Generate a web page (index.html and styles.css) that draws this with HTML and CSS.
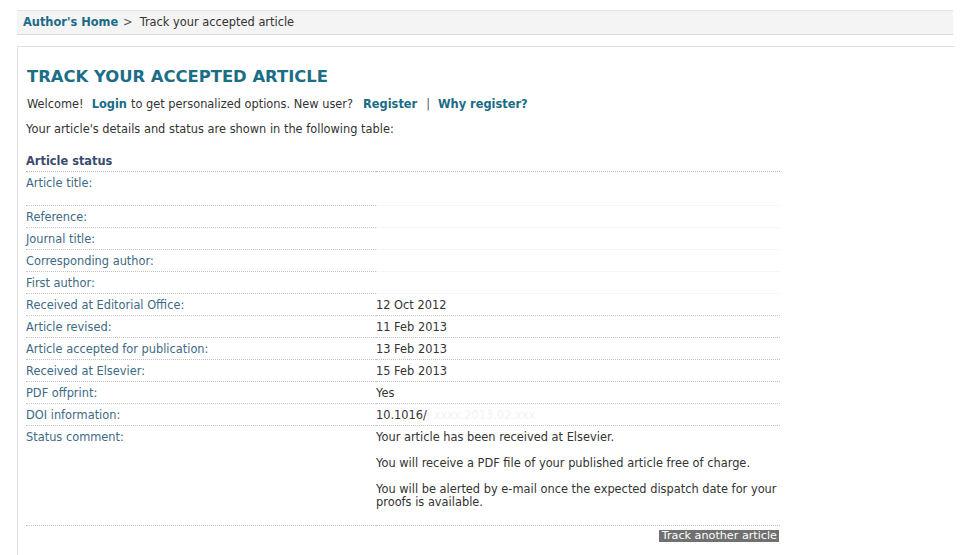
FILE: index.html
```html
<!DOCTYPE html>
<html>
<head>
<meta charset="utf-8">
<title>Track your accepted article</title>
<link rel="stylesheet" href="styles.css">
</head>
<body>
<div class="breadcrumb"><a class="crumb-link" href="#">Author's Home</a><span class="sep">&gt;</span>Track your accepted article</div>
<div class="panel">
  <h1 class="title">TRACK YOUR ACCEPTED ARTICLE</h1>
  <p class="welcome">Welcome!<a class="link" href="#">Login</a>to get personalized options. New user?<a class="link reg" href="#">Register</a><span class="bar">|</span><a class="link why" href="#">Why register?</a></p>
  <p class="intro">Your article's details and status are shown in the following table:</p>
  <table class="status">
    <tr><th colspan="2" class="head">Article status</th></tr>
    <tr class="tall faint"><td class="label">Article title:</td><td class="value"></td></tr>
    <tr class="faint"><td class="label">Reference:</td><td class="value"></td></tr>
    <tr class="faint"><td class="label">Journal title:</td><td class="value"></td></tr>
    <tr class="faint"><td class="label">Corresponding author:</td><td class="value"></td></tr>
    <tr class="faint"><td class="label">First author:</td><td class="value"></td></tr>
    <tr><td class="label">Received at Editorial Office:</td><td class="value">12 Oct 2012</td></tr>
    <tr><td class="label">Article revised:</td><td class="value">11 Feb 2013</td></tr>
    <tr><td class="label">Article accepted for publication:</td><td class="value">13 Feb 2013</td></tr>
    <tr><td class="label">Received at Elsevier:</td><td class="value">15 Feb 2013</td></tr>
    <tr><td class="label">PDF offprint:</td><td class="value">Yes</td></tr>
    <tr><td class="label">DOI information:</td><td class="value">10.1016/<span class="blur">j.xxxx.2013.02.xxx</span></td></tr>
    <tr class="comment"><td class="label">Status comment:</td><td class="value">
      <p>Your article has been received at Elsevier.</p>
      <p>You will receive a PDF file of your published article free of charge.</p>
      <p>You will be alerted by e-mail once the expected dispatch date for your proofs is available.</p>
    </td></tr>
  </table>
  <div class="actions"><a class="btn" href="#">Track another article</a></div>
</div>
</body>
</html>
```
FILE: styles.css
```css
html, body {
  margin: 0;
  padding: 0;
  background: #fff;
}
body {
  font-family: "DejaVu Sans", Verdana, sans-serif;
  font-size: 11.4px;
  color: #333;
}
a { text-decoration: none; }

.breadcrumb {
  margin: 10px 10px 0 17px;
  height: 23px;
  line-height: 23px;
  background: #f4f4f4;
  border-top: 1px solid #e4e4e4;
  border-bottom: 1px solid #d9d9d9;
  padding-left: 6px;
  color: #333;
}
.crumb-link {
  color: #1b6b86;
  font-weight: bold;
}
.sep {
  margin: 0 7px 0 5px;
  color: #555;
}

.panel {
  box-sizing: border-box;
  margin: 11px 8px 0 17px;
  border-top: 1px solid #e2e2e2;
  border-left: 1px solid #e2e2e2;
  padding: 20px 0 0 8px;
  height: 509px;
}
.title {
  margin: 0 0 0 1px;
  font-size: 16.4px;
  line-height: 20px;
  font-weight: bold;
  color: #1b6e85;
}
.welcome {
  margin: 10px 0 0 1px;
  line-height: 14px;
}
.link {
  color: #1b6b86;
  font-weight: bold;
  margin: 0 4px 0 8px;
}
.link.reg { margin-left: 10px; }
.link.why { margin-left: 8px; }
.bar { margin: 0 0 0 5px; color: #555; }
.intro {
  margin: 11px 0 0 0;
  line-height: 14px;
}

.status {
  border-collapse: collapse;
  width: 754px;
  margin-top: 18px;
}
.status th.head {
  text-align: left;
  font-weight: bold;
  color: #3b4b6c;
  line-height: 14px;
  padding: 0 0 3px 0;
  border-bottom: 1px dotted #bbb;
}
.status td {
  line-height: 14px;
  padding: 4px 0 3px 0;
  border-bottom: 1px dotted #c4c4c4;
  vertical-align: top;
}
.status td.label {
  width: 350px;
  color: #3e6a84;
}
.status tr.faint td.value {
  border-bottom-color: #eeeeee;
}
.status tr.tall td {
  height: 26px;
}
.status tr.comment td {
  line-height: 13px;
  padding: 5px 0 3px 0;
}
.status tr.comment p {
  margin: 0 0 13px 0;
}
.blur {
  color: #f3f3f3;
}

.actions {
  width: 754px;
  display: flex;
  justify-content: flex-end;
  margin-top: 4px;
}
.btn {
  background: #707070;
  color: #fff;
  font-size: 11.2px;
  line-height: 12px;
  padding: 0 2px 0 3px;
  margin-right: 1px;
}
```
